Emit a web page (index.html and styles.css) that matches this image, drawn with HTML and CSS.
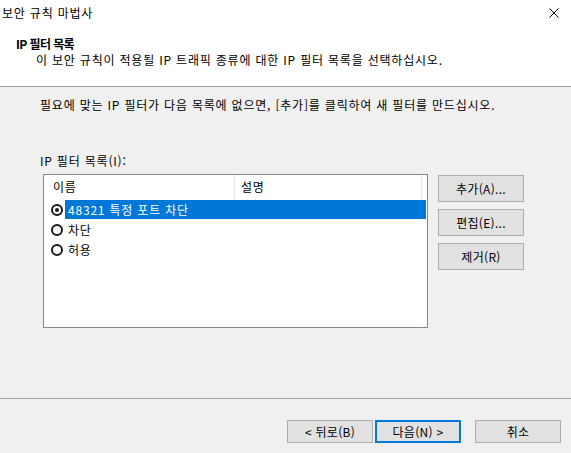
FILE: index.html
```html
<!DOCTYPE html>
<html lang="ko">
<head>
<meta charset="utf-8">
<title>보안 규칙 마법사</title>
<link rel="stylesheet" href="styles.css">
</head>
<body>
<div class="window">
  <div class="titlebar">
    <span class="title">보안 규칙 마법사</span>
    <svg class="close" width="10" height="10" viewBox="0 0 10 10"><path d="M0.5 0.5 L9.5 9.5 M9.5 0.5 L0.5 9.5" stroke="#000" stroke-width="1" fill="none"/></svg>
  </div>
  <div class="header">
    <div class="h-title">IP 필터 목록</div>
    <div class="h-sub">이 보안 규칙이 적용될 IP 트래픽 종류에 대한 IP 필터 목록을 선택하십시오.</div>
  </div>
  <div class="content">
    <div class="intro">필요에 맞는 IP 필터가 다음 목록에 없으면, [추가]를 클릭하여 새 필터를 만드십시오.</div>
    <div class="label">IP 필터 목록(I):</div>
    <div class="list-area">
      <div class="listbox">
        <div class="list-head">
          <div class="col col-name">이름</div>
          <div class="col col-desc">설명</div>
        </div>
        <div class="row">
          <span class="radio checked"></span>
          <span class="row-label selected">48321 특정 포트 차단</span>
        </div>
        <div class="row">
          <span class="radio"></span>
          <span class="row-label">차단</span>
        </div>
        <div class="row">
          <span class="radio"></span>
          <span class="row-label">허용</span>
        </div>
      </div>
      <div class="side-buttons">
        <button class="btn side">추가(A)...</button>
        <button class="btn side">편집(E)...</button>
        <button class="btn side">제거(R)</button>
      </div>
    </div>
  </div>
  <div class="footer">
    <button class="btn foot">&lt; 뒤로(B)</button>
    <button class="btn foot default">다음(N) &gt;</button>
    <button class="btn foot cancel">취소</button>
  </div>
</div>
</body>
</html>
```
FILE: styles.css
```css
* { box-sizing: border-box; }
html, body {
  margin: 0;
  padding: 0;
  background: #f0f0f0;
}
body {
  font-family: "Noto Sans CJK KR", "Noto Sans", sans-serif;
  font-size: 12px;
  color: #000;
  letter-spacing: 0.8px;
}
.window {
  width: 571px;
  height: 453px;
  display: flex;
  flex-direction: column;
  background: #f0f0f0;
}
.titlebar {
  height: 26px;
  background: #fff;
  display: flex;
  align-items: center;
  justify-content: space-between;
  padding: 0 12px 0 2px;
}
.title { line-height: 16px; }
.close { display: block; }
.header {
  background: #fff;
  padding: 10px 0 18px 16px;
  border-bottom: 1px solid #a0a0a0;
  line-height: 16px;
}
.h-title {
  font-weight: bold;
  letter-spacing: -0.6px;
}
.h-sub { padding-left: 20px; }
.content {
  flex: 1;
  padding: 10px 0 0 40px;
  line-height: 16px;
}
.label { margin-top: 40px; }
.list-area {
  display: flex;
  gap: 10px;
  margin-top: 5px;
  margin-left: 3px;
}
.listbox {
  width: 385px;
  height: 154px;
  background: #fff;
  border: 1px solid #828790;
}
.list-head {
  display: flex;
  height: 24px;
}
.col {
  display: flex;
  align-items: center;
  padding-left: 9px;
}
.col-name {
  width: 191px;
  border-right: 1px solid #e5e5e5;
}
.col-desc {
  width: 187px;
  padding-left: 6px;
  border-right: 1px solid #e5e5e5;
}
.row {
  height: 20px;
  display: flex;
  align-items: flex-end;
  padding-left: 7px;
}
.radio {
  width: 12px;
  height: 12px;
  border: 2px solid #1a1a1a;
  border-radius: 50%;
  margin: 0 2px 3px 0;
  display: flex;
  align-items: center;
  justify-content: center;
  flex: none;
}
.radio.checked::after {
  content: "";
  width: 4px;
  height: 4px;
  border-radius: 50%;
  background: #1a1a1a;
}
.row-label {
  flex: 1;
  height: 19px;
  line-height: 19px;
  padding-left: 3px;
  margin-right: 1px;
}
.row-label.selected {
  background: #0078d7;
  color: #fff;
}
.side-buttons {
  display: flex;
  flex-direction: column;
  gap: 7px;
  padding-top: 1px;
}
.btn {
  font-family: inherit;
  font-size: 12px;
  letter-spacing: 0.3px;
  color: #000;
  background: #e1e1e1;
  border: 1px solid #adadad;
  padding: 0;
  margin: 0;
  line-height: 16px;
}
.btn.side {
  width: 86px;
  height: 27px;
}
.footer {
  border-top: 1px solid #a0a0a0;
  padding: 21px 10px 10px 0;
  display: flex;
  justify-content: flex-end;
  gap: 2px;
}
.btn.foot {
  width: 86px;
  height: 23px;
}
.btn.default {
  border: 2px solid #0078d7;
}
.btn.cancel {
  margin-left: 12px;
}
```
